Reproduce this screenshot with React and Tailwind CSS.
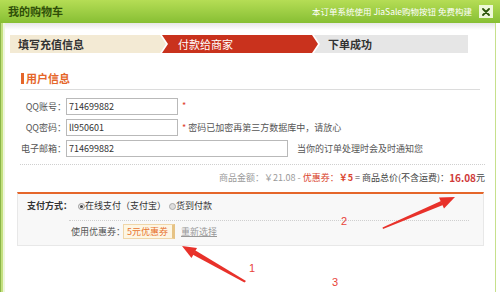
export default function App() {
  return (
    <div className="relative w-[500px] h-[292px] overflow-hidden bg-white text-[9px] text-[#555] font-['Noto_Sans_CJK_SC','Noto_Sans',sans-serif]">
      {/* Header */}
      <div className="h-[23px] flex items-center justify-between pl-[8px] pr-[7px] bg-linear-to-b from-[#b5dd55] to-[#87bf33]">
        <span className="text-[11px] font-bold text-[#2f4f08] leading-none">我的购物车</span>
        <div className="flex items-center gap-[7px]">
          <span className="text-[8.5px] text-white leading-none whitespace-nowrap">本订单系统使用 JiaSale购物按钮 免费构建</span>
          <span className="w-[14px] h-[13px] bg-[#eef8d8] flex items-center justify-center">
            <svg width="8" height="8" viewBox="0 0 8 8">
              <path d="M1 1 L7 7 M7 1 L1 7" stroke="#2d560a" strokeWidth="1.8" strokeLinecap="round" />
            </svg>
          </span>
        </div>
      </div>

      {/* Body */}
      <div className="flex h-[269px]">
        <div className="flex">
          <div className="w-px bg-[#8ab548]" />
          <div className="w-[2px] bg-[#c3e07e]" />
          <div className="w-[2px] bg-[#eef7dc]" />
        </div>

        <div className="flex-1 flex flex-col">
          <div className="h-[7px] bg-linear-to-b from-[#e6e6e6] to-white" />

          {/* Steps */}
          <div className="mt-[5px] ml-[5px] flex h-[18px]">
            <div className="w-[156px] h-full bg-[#f3ead4] pl-[8px] flex items-center text-[11px] font-bold text-[#333] [clip-path:polygon(0_0,calc(100%-6px)_0,100%_50%,calc(100%-6px)_100%,0_100%)]">
              填写充值信息
            </div>
            <div className="-ml-[4px] w-[156px] h-full bg-[#c9321d] pl-[16px] flex items-center text-[11px] text-white [clip-path:polygon(0_0,calc(100%-6px)_0,100%_50%,calc(100%-6px)_100%,0_100%,6px_50%)]">
              付款给商家
            </div>
            <div className="-ml-[4px] w-[154px] h-full bg-[#e6e6e6] pl-[14px] flex items-center text-[11px] font-bold text-[#333] [clip-path:polygon(0_0,100%_0,100%_100%,0_100%,6px_50%)]">
              下单成功
            </div>
          </div>

          {/* Section heading */}
          <div className="mt-[18px] ml-[15px] mr-[15px] pb-[4px] border-b border-[#dcdcdc] flex items-center h-[19px]">
            <div className="ml-[1px] w-[3px] h-[11px] bg-[#e5662a]" />
            <span className="ml-[2px] text-[11px] font-bold text-[#e5662a] leading-[14px]">用户信息</span>
          </div>

          {/* Rows */}
          <div className="ml-[15px] flex flex-col">
            <div className="mt-[8px] flex items-center h-[17px]">
              <span className="w-[46px] text-right whitespace-nowrap">QQ账号：</span>
              <div className="w-[112px] h-[17px] border border-[#b9b9b9] bg-white pl-[2px] flex items-center text-[#333]">714699882</div>
              <span className="ml-[4px] text-[#e0402a] self-start mt-[1px]">*</span>
            </div>
            <div className="mt-[4px] flex items-center h-[17px]">
              <span className="w-[46px] text-right whitespace-nowrap">QQ密码：</span>
              <div className="w-[112px] h-[17px] border border-[#b9b9b9] bg-white pl-[2px] flex items-center text-[#333]">ll950601</div>
              <span className="ml-[4px] whitespace-nowrap"><span className="text-[#e0402a]">*</span> 密码已加密再第三方数据库中，请放心</span>
            </div>
            <div className="mt-[4px] flex items-center h-[17px]">
              <span className="w-[46px] text-right whitespace-nowrap">电子邮箱：</span>
              <div className="w-[222px] h-[17px] border border-[#b9b9b9] bg-white pl-[2px] flex items-center text-[#333]">714699882</div>
              <span className="ml-[9px] whitespace-nowrap">当你的订单处理时会及时通知您</span>
            </div>
          </div>

          <div className="mt-[7px] ml-[15px] mr-[10px] border-t border-dotted border-[#cfcfcf]" />

          {/* Totals */}
          <div className="mt-[7px] mr-[10px] h-[12px] flex items-center justify-end leading-[12px] whitespace-nowrap">
            <span className="text-[#9a9a9a]">商品金额：￥21.08 - </span>
            <span className="text-[#d9452e]">&nbsp;优惠券：</span>
            <span className="text-[#d9452e] font-bold">￥5</span>
            <span className="text-[#444]">&nbsp;= 商品总价(不含运费)：</span>
            <span className="text-[#d03a3a] font-bold text-[10px]">16.08</span>
            <span className="text-[#444]">元</span>
          </div>

          {/* Payment box */}
          <div className="mt-[8px] ml-[12px] mr-[11px] h-[54px] border-t-2 border-t-[#e5662a] border-x border-b border-x-[#e8e8e8] border-b-[#e8e8e8] bg-[#f8f8f8] flex flex-col">
            <div className="mt-[6px] pl-[9px] h-[12px] flex items-center whitespace-nowrap">
              <span className="w-[45px] font-bold text-[#333]">支付方式：</span>
              <span className="ml-[6px] w-[7px] h-[7px] rounded-full border border-[#9a9a9a] bg-[#eee] flex items-center justify-center">
                <span className="w-[3px] h-[3px] rounded-full bg-[#444]" />
              </span>
              <span className="text-[#333]">在线支付（支付宝）</span>
              <span className="ml-[3px] w-[7px] h-[7px] rounded-full border border-[#aaa] bg-[#ddd]" />
              <span className="text-[#333]">货到付款</span>
            </div>
            <div className="mt-[8px] ml-[51px] mr-[14px] border-t border-dotted border-[#cfcfcf]" />
            <div className="mt-[3px] pl-[53px] h-[15px] flex items-center whitespace-nowrap">
              <span className="w-[52px] text-[#555]">使用优惠券：</span>
              <span className="w-[52px] h-[15px] border border-[#f0d6a8] border-r-[3px] border-r-[#e6c385] bg-[#fdf6e4] flex items-center pl-[3px] text-[#e8742e]">5元优惠券</span>
              <span className="ml-[6px] text-[#999] underline">重新选择</span>
            </div>
          </div>
        </div>

        <div className="w-px bg-[#c6e08c]" />
        <div className="w-[4px]" />
      </div>

      {/* Annotation overlay */}
      <svg className="absolute inset-0 pointer-events-none" width="500" height="292" viewBox="0 0 500 292">
        <polygon points="246,281 244.5,282.5 192.5,254.5 195.5,250.5" fill="#e8312a" />
        <polygon points="182,246 197,248 191.5,258" fill="#e8312a" />
        <polygon points="383,229 382.5,227.5 441,201 443,205" fill="#e8312a" />
        <polygon points="455,197 444,208.5 439,197.5" fill="#e8312a" />
      </svg>
      <span className="absolute left-[249px] top-[263px] text-[11px] leading-none text-[#e8443a] font-['Liberation_Sans',sans-serif]">1</span>
      <span className="absolute left-[341px] top-[216px] text-[11px] leading-none text-[#e8443a] font-['Liberation_Sans',sans-serif]">2</span>
      <span className="absolute left-[332px] top-[277px] text-[11px] leading-none text-[#e8443a] font-['Liberation_Sans',sans-serif]">3</span>
    </div>
  );
}
